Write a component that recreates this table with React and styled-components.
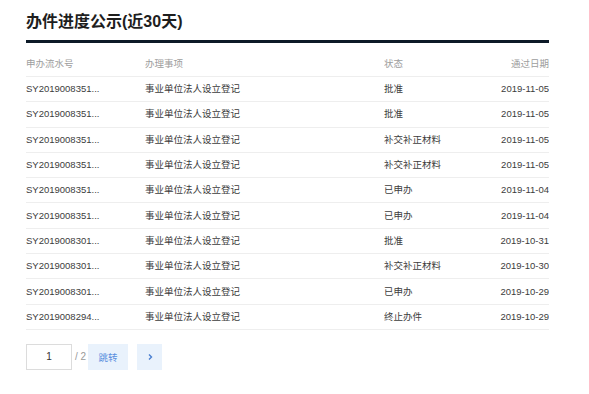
import React from "react";
import styled, { createGlobalStyle } from "styled-components";

const Global = createGlobalStyle`
  html, body { margin: 0; padding: 0; background: #fff; }
  body { font-family: "Liberation Sans", Arial, "Noto Sans CJK SC", sans-serif; }
`;

const Page = styled.div`
  width: 523px;
  padding: 12px 0 0 26px;
`;

const Title = styled.h2`
  margin: 0;
  font-size: 16px;
  line-height: 20px;
  font-weight: bold;
  color: #1e1e1e;
  padding-bottom: 8px;
  border-bottom: 3px solid #0d1a28;
`;

const Row = styled.div`
  display: grid;
  grid-template-columns: 119px 239px 1fr 1fr;
  align-items: ${(p) => (p.$head ? "end" : "center")};
  height: ${(p) => (p.$head ? "34px" : "24.3px")};
  padding-bottom: ${(p) => (p.$head ? "6px" : "0")};
  box-sizing: ${(p) => (p.$head ? "border-box" : "content-box")};
  border-bottom: 1px solid #eeeeee;
  font-size: 9.5px;
  line-height: 12px;
  color: ${(p) => (p.$head ? "#9d9d9d" : "#3c3c3c")};
`;

const Cell = styled.div`
  white-space: nowrap;
  overflow: hidden;
  text-align: ${(p) => (p.$right ? "right" : "left")};
`;

const Pager = styled.div`
  display: flex;
  align-items: center;
  margin-top: 14px;
  height: 26px;
  font-size: 9.5px;
`;

const PageInput = styled.div`
  width: 44px;
  height: 24px;
  border: 1px solid #dcdcdc;
  display: flex;
  align-items: center;
  justify-content: center;
  color: #333;
  font-size: 10px;
`;

const Total = styled.span`
  color: #999;
  margin: 0 2px 0 3px;
  font-size: 10px;
`;

const PagerButton = styled.div`
  height: 26px;
  width: ${(p) => p.$w}px;
  margin-left: ${(p) => p.$ml || 0}px;
  background: #e9f2fc;
  color: #5a8fde;
  display: flex;
  align-items: center;
  justify-content: center;
`;

const rows = [
  ["SY2019008351...", "批准", "2019-11-05"],
  ["SY2019008351...", "批准", "2019-11-05"],
  ["SY2019008351...", "补交补正材料", "2019-11-05"],
  ["SY2019008351...", "补交补正材料", "2019-11-05"],
  ["SY2019008351...", "已申办", "2019-11-04"],
  ["SY2019008351...", "已申办", "2019-11-04"],
  ["SY2019008301...", "批准", "2019-10-31"],
  ["SY2019008301...", "补交补正材料", "2019-10-30"],
  ["SY2019008301...", "已申办", "2019-10-29"],
  ["SY2019008294...", "终止办件", "2019-10-29"],
];

export default function App() {
  return (
    <>
      <Global />
      <Page>
        <Title>办件进度公示(近30天)</Title>
        <Row $head>
          <Cell>申办流水号</Cell>
          <Cell>办理事项</Cell>
          <Cell>状态</Cell>
          <Cell $right>通过日期</Cell>
        </Row>
        {rows.map((r, i) => (
          <Row key={i}>
            <Cell>{r[0]}</Cell>
            <Cell>事业单位法人设立登记</Cell>
            <Cell>{r[1]}</Cell>
            <Cell $right>{r[2]}</Cell>
          </Row>
        ))}
        <Pager>
          <PageInput>1</PageInput>
          <Total>/ 2</Total>
          <PagerButton $w={40}>跳转</PagerButton>
          <PagerButton $w={25} $ml={9}>
            <svg width="8" height="8" viewBox="0 0 8 8">
              <path d="M3 1.5 L5.5 4 L3 6.5" fill="none" stroke="#4a7fd0" strokeWidth="1.4" />
            </svg>
          </PagerButton>
        </Pager>
      </Page>
    </>
  );
}
